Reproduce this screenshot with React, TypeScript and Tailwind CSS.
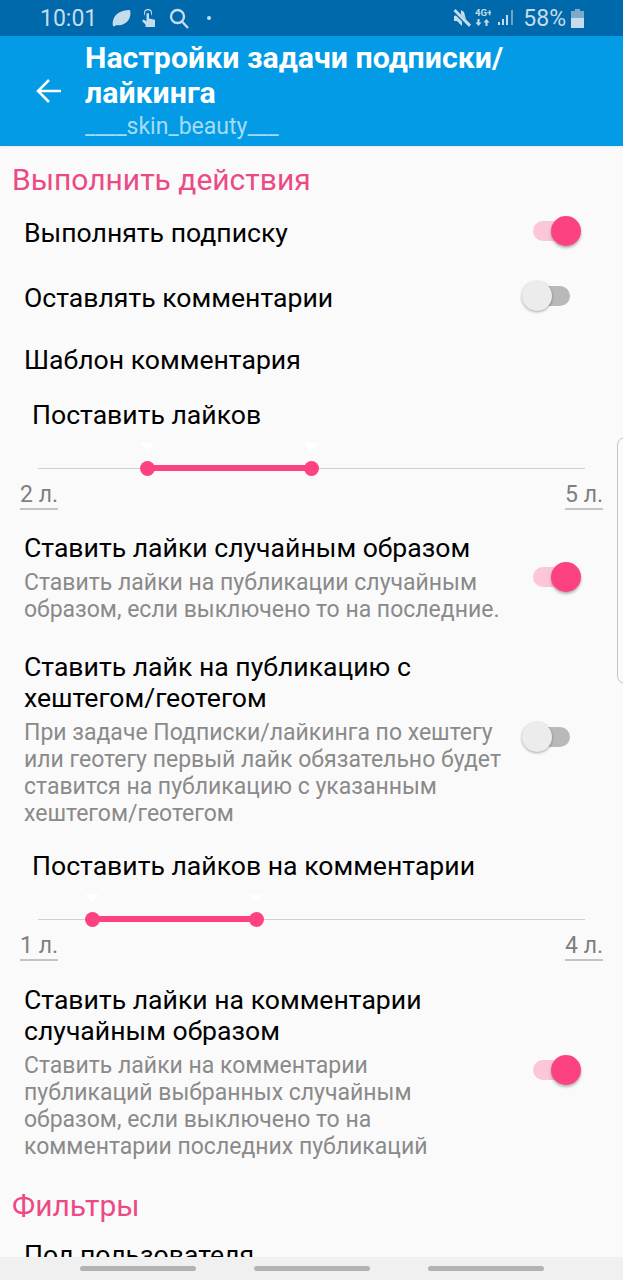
import React from "react";

const font = "font-['Roboto',sans-serif]";

function Toggle({ on }: { on: boolean }) {
    if (on) {
        return (
            <div className="relative w-[48px] h-[30px] shrink-0">
                <div className="absolute left-0 top-[5px] w-[46px] h-[20px] rounded-full bg-[#fbc6d8]" />
                <div className="absolute right-0 top-0 w-[30px] h-[30px] rounded-full bg-[#fd4281] shadow-[0_2px_3px_rgba(0,0,0,0.3)]" />
            </div>
        );
    }
    return (
        <div className="relative w-[48px] h-[30px] shrink-0 mr-[11px]">
            <div className="absolute right-0 top-[5px] w-[40px] h-[20px] rounded-full bg-[#b9b9b9]" />
            <div className="absolute left-0 top-0 w-[30px] h-[30px] rounded-full bg-[#ececec] shadow-[0_1px_3px_rgba(0,0,0,0.35)]" />
        </div>
    );
}

function RangeRow({ title, min, max, from, to, titleClass }: { title: string; min: string; max: string; from: number; to: number; titleClass: string }) {
    return (
        <div className={titleClass}>
            <p className="pl-[32px] text-[26.6px] leading-[32px] text-black">{title}</p>
            <div className="relative mx-[38px] mt-[26px] h-[24px]">
                <div className="absolute left-0 right-0 top-[11px] h-[1px] bg-[#cfcfcf]" />
                <div className="absolute top-[8px] h-[6px] bg-[#fd4281]" style={{ left: from, width: to - from }} />
                <div className="absolute top-[4px] w-[15px] h-[15px] rounded-full bg-[#fd4281]" style={{ left: from - 7 }} />
                <div className="absolute top-[4px] w-[15px] h-[15px] rounded-full bg-[#fd4281]" style={{ left: to - 7 }} />
                <div className="absolute top-[-14px] w-0 h-0 border-x-[7px] border-x-transparent border-t-[8px] border-t-white" style={{ left: from - 7 }} />
                <div className="absolute top-[-14px] w-0 h-0 border-x-[7px] border-x-transparent border-t-[8px] border-t-white" style={{ left: to - 7 }} />
            </div>
            <div className="flex justify-between px-[20px]">
                <span className="w-[38px] h-[29px] border-b-2 border-[#c4c4c4] text-[23px] leading-[28px] text-[#7f7f7f] whitespace-nowrap">{min}</span>
                <span className="w-[38px] h-[29px] border-b-2 border-[#c4c4c4] text-[23px] leading-[28px] text-[#7f7f7f] whitespace-nowrap">{max}</span>
            </div>
        </div>
    );
}

function SettingRow({ title, description, on, className, toggleTop, descClass = "mt-[4px]" }: { title: React.ReactNode; description?: React.ReactNode; on: boolean; className: string; toggleTop: string; descClass?: string }) {
    return (
        <div className={`flex items-start justify-between pl-[24px] pr-[42px] ${className}`}>
            <div className="w-[490px]">
                <p className="text-[26.6px] leading-[31px] text-black">{title}</p>
                {description && <p className={`${descClass} text-[23px] leading-[27px] text-[#8a8a8a]`}>{description}</p>}
            </div>
            <div className={toggleTop}>
                <Toggle on={on} />
            </div>
        </div>
    );
}

export default function App() {
    return (
        <div className={`relative w-[623px] h-[1280px] overflow-hidden bg-[#fafafa] ${font}`}>
            {/* Status bar */}
            <div className="flex items-center justify-between h-[36px] bg-[#0069ab] pl-[40px] pr-[39px] text-[#c4dcec]">
                <div className="flex items-center">
                    <span className="text-[23px] leading-none">10:01</span>
                    <svg className="ml-[15px]" width="19" height="17" viewBox="0 0 19 17" fill="#c4dcec">
                        <path d="M1 16c-1-4 .5-9 4-12 3-2.500 8-4 13-4 1 3 .5 7-1.500 10-2.500 4-8 6-12 5l-2.500 1.500z" />
                    </svg>
                    <svg className="ml-[10px]" width="15" height="19" viewBox="0 0 15 19" fill="#c4dcec">
                        <path d="M3 4a4 4 0 0 1 8 0c0 1-.4 2-1 2.800V4.200a3 3 0 0 0-6 0v2.600C3.400 6 3 5 3 4z" />
                        <path d="M5.500 4.200h2.500V9.500l6 1.200V18H4.500v-2.500L1 12l1.500-1.500 3 1.700z" />
                    </svg>
                    <svg className="ml-[13px]" width="20" height="21" viewBox="0 0 20 21" fill="none" stroke="#c4dcec" strokeWidth="2.400">
                        <circle cx="8.500" cy="8.500" r="6.500" />
                        <path d="M13 13.500l6 6.500" />
                    </svg>
                    <span className="ml-[18px] w-[4px] h-[4px] rounded-full bg-[#c4dcec]" />
                </div>
                <div className="flex items-center">
                    <svg width="18" height="18" viewBox="0 0 18 18" fill="#c4dcec">
                        <path d="M2.500 0L18 15.500 16 18 .5 2z" />
                        <path d="M3 6.500L1 7v5h3l5 5v-4.500zM8 1v4.500L13 10.500 11 3z" />
                    </svg>
                    <svg className="ml-[4px]" width="16" height="20" viewBox="0 0 16 20" fill="#c4dcec">
                        <text x="0" y="8" fontSize="9.500" fontWeight="700" fontFamily="Roboto, sans-serif">4G+</text>
                        <path d="M3.500 18l-3-3.500h2V11h2v3.500h2zM11.500 11l3 3.500h-2V18h-2v-3.500h-2z" />
                    </svg>
                    <svg className="ml-[7px]" width="16" height="18" viewBox="0 0 16 18">
                        <rect x="0" y="13" width="2" height="3" fill="#c4dcec" />
                        <rect x="4" y="10" width="2" height="6" fill="#c4dcec" />
                        <rect x="8" y="6" width="2" height="10" fill="#c4dcec" />
                        <rect x="13" y="1" width="2" height="15" fill="#6fa3c9" />
                    </svg>
                    <span className="ml-[9px] text-[23px] leading-none">58%</span>
                    <svg className="ml-[5px]" width="13" height="19" viewBox="0 0 13 19">
                        <rect x="4" y="0" width="5" height="2" fill="#7fa9c9" />
                        <rect x="0" y="2" width="13" height="7" fill="#7fa9c9" />
                        <rect x="0" y="9" width="13" height="10" fill="#c4dcec" />
                    </svg>
                </div>
            </div>

            {/* Toolbar */}
            <div className="flex items-center h-[110px] bg-[#039be5] shadow-[0_1px_2px_rgba(0,0,0,0.08)]">
                <svg className="ml-[36px]" width="26" height="26" viewBox="0 0 26 26" fill="none" stroke="#ffffff" strokeWidth="2.500">
                    <path d="M25 13H2M13 2L2 13l11 11" />
                </svg>
                <div className="ml-[23px] w-[480px] mb-[2px]">
                    <p className="text-[30.3px] leading-[35px] font-bold text-white">Настройки задачи подписки/ лайкинга</p>
                    <p className="mt-[4px] text-[23px] leading-[26px] text-[#a5dcf7]">____skin_beauty___</p>
                </div>
            </div>

            {/* Content */}
            <p className="mt-[17px] pl-[12px] text-[30px] leading-[34px] text-[#ec4a86]">Выполнить действия</p>
            <SettingRow title="Выполнять подписку" on className="mt-[20px]" toggleTop="mt-[-1px]" />
            <SettingRow title="Оставлять комментарии" on={false} className="mt-[34px]" toggleTop="mt-[-1px]" />
            <p className="mt-[31px] pl-[24px] text-[26.6px] leading-[31px] text-black">Шаблон комментария</p>
            <RangeRow title="Поставить лайков" min="2 л." max="5 л." from={109} to={273} titleClass="mt-[24px]" />

            <SettingRow
                title="Ставить лайки случайным образом"
                description="Ставить лайки на публикации случайным образом, если выключено то на последние."
                on
                className="mt-[22px]"
                toggleTop="mt-[30px]"
                descClass="mt-[6px]"
            />
            <SettingRow
                title="Ставить лайк на публикацию с хештегом/геотегом"
                description="При задаче Подписки/лайкинга по хештегу или геотегу первый лайк обязательно будет ставится на публикацию с указанным хештегом/геотегом"
                on={false}
                className="mt-[28px]"
                toggleTop="mt-[71px]"
                descClass="mt-[6px]"
            />
            <RangeRow title="Поставить лайков на комментарии" min="1 л." max="4 л." from={54} to={218} titleClass="mt-[23px]" />
            <SettingRow
                title="Ставить лайки на комментарии случайным образом"
                description={
                    <>
                        Ставить лайки на комментарии
                        <br />
                        публикаций выбранных случайным
                        <br />
                        образом, если выключено то на
                        <br />
                        комментарии последних публикаций
                    </>
                }
                on
                className="mt-[23px]"
                toggleTop="mt-[71px]"
                descClass="mt-[6px]"
            />
            <p className="mt-[29px] pl-[12px] text-[30px] leading-[34px] text-[#ec4a86]">Фильтры</p>
            <p className="mt-[16px] pl-[24px] text-[26.6px] leading-[31px] text-black">Пол пользователя</p>

            {/* Edge panel handle */}
            <div className="absolute right-[-4px] top-[437px] w-[10px] h-[247px] rounded-l-[8px] border border-[#c4c4c4] bg-[#fafafa]" />

            {/* Nav bar */}
            <div className="absolute left-0 right-0 bottom-0 flex items-center justify-center gap-[58px] h-[23px] bg-[#f0f0f0]">
                <span className="w-[116px] h-[5px] rounded-full bg-[#b3b3b3]" />
                <span className="w-[116px] h-[5px] rounded-full bg-[#b3b3b3]" />
                <span className="w-[116px] h-[5px] rounded-full bg-[#b3b3b3]" />
            </div>
        </div>
    );
}
